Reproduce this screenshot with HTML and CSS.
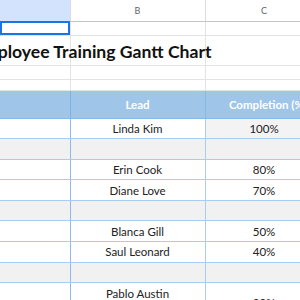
FILE: index.html
```html
<!DOCTYPE html>
<html lang="en">
<head>
    <meta charset="UTF-8">
    <title>Employee Training Gantt Chart</title>
    <link rel="stylesheet" href="styles.css">
</head>
<body>
    <div class="sheet">
        <table class="grid">
            <colgroup>
                <col class="col-a">
                <col class="col-b">
                <col class="col-c">
            </colgroup>
            <tr class="col-head">
                <th class="selected"></th>
                <th>B</th>
                <th>C</th>
            </tr>
            <tr class="row-small">
                <td class="active-cell"></td>
                <td></td>
                <td></td>
            </tr>
            <tr class="row-title">
                <td class="title-cell"><span class="title">Employee Training Gantt Chart</span></td>
                <td></td>
                <td></td>
            </tr>
            <tr class="row-small">
                <td></td><td></td><td></td>
            </tr>
            <tr class="row-gap">
                <td></td><td></td><td></td>
            </tr>
            <tr class="table-head">
                <td></td>
                <td>Lead</td>
                <td>Completion (%)</td>
            </tr>
            <tr class="data">
                <td></td><td>Linda Kim</td><td class="alt">100%</td>
            </tr>
            <tr class="data phase">
                <td></td><td></td><td></td>
            </tr>
            <tr class="data">
                <td></td><td>Erin Cook</td><td>80%</td>
            </tr>
            <tr class="data">
                <td></td><td>Diane Love</td><td>70%</td>
            </tr>
            <tr class="data phase">
                <td></td><td></td><td></td>
            </tr>
            <tr class="data">
                <td></td><td>Blanca Gill</td><td>50%</td>
            </tr>
            <tr class="data">
                <td></td><td>Saul Leonard</td><td>40%</td>
            </tr>
            <tr class="data phase">
                <td></td><td></td><td></td>
            </tr>
            <tr class="data tall">
                <td></td><td class="top">Pablo Austin</td><td class="low">30%</td>
            </tr>
        </table>
    </div>
</body>
</html>
```

FILE: styles.css
```css
* {
    margin: 0;
    padding: 0;
    box-sizing: border-box;
}

body {
    background: white;
    font-family: 'Lato', 'Liberation Sans', sans-serif;
    overflow: hidden;
}

.sheet {
    width: 300px;
    height: 300px;
    overflow: hidden;
}

.grid {
    border-collapse: collapse;
    table-layout: fixed;
    width: 323px;
}

.col-a { width: 70px; }
.col-b { width: 135px; }
.col-c { width: 118px; }

.grid td,
.grid th {
    border: 1px solid #e2e3e3;
    padding: 0;
    white-space: nowrap;
    overflow: visible;
}

.grid tr > :first-child {
    border-left: none;
}

/* column letters */
.col-head th {
    height: 21px;
    font-size: 9px;
    font-weight: normal;
    color: #5f6368;
    border-top: none;
    border-bottom: 1px solid #c4c7c5;
    border-right: 1px solid #dadce0;
}

.col-head th.selected {
    background: #d3e3fd;
}

.row-small td { height: 14px; }
.row-title td { height: 30px; }
.row-gap td { height: 11px; }

.active-cell {
    outline: 2px solid #1a73e8;
    outline-offset: -2px;
}

.title {
    display: block;
    margin-left: -27px;
    padding-top: 2px;
    font-size: 17.6px;
    font-weight: bold;
    color: #111;
}

/* blue table */
.table-head td {
    height: 28px;
    background: #9fc5e8;
    color: white;
    font-weight: bold;
    font-size: 11.5px;
    text-align: center;
    border: 1px solid #8ab8e4;
}

.table-head td:last-child {
    padding-left: 8px;
}

.data td {
    height: 20.6px;
    font-size: 11.5px;
    color: #222;
    text-align: center;
    border: 1px solid #a8ccf2;
}

.data td:first-child {
    border-right: 1px solid #8fbbea;
}

.table-head td:first-child {
    border-right: 1px solid #7fb0e6;
}

.data td.alt {
    background: #f3f3f3;
}

.data.phase td {
    background: #f1f1f1;
}

.data.tall td {
    height: 40px;
}

.data td.top {
    vertical-align: top;
    padding-top: 4px;
}

.data td.low {
    vertical-align: top;
    padding-top: 13px;
}
```
